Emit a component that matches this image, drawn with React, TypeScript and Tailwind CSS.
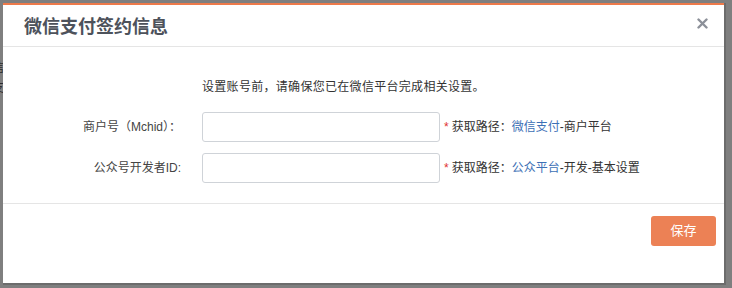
import React, { useState } from 'react';

const FONT = 'font-["Liberation_Sans","Noto_Sans_CJK_SC",sans-serif]';

const CloseIcon: React.FC = () => (
  <svg width="11" height="11" viewBox="0 0 11 11" className="block">
    <path d="M1.5 1.5 L9.5 9.5 M9.5 1.5 L1.5 9.5" stroke="#8c9099" strokeWidth="2.4" strokeLinecap="round" />
  </svg>
);

const App: React.FC = () => {
  const [mchid, setMchid] = useState<string>('');
  const [appId, setAppId] = useState<string>('');

  return (
    <div className={`w-[732px] h-[288px] bg-[#7f7f7f] overflow-hidden ${FONT}`}>
      <div className="flex h-full">
        {/* page behind the overlay peeks out on the left */}
        <div className="w-[3px] shrink-0 flex flex-col text-[12px] leading-[20px] text-[#2c2c2c] overflow-hidden">
          <div className="h-[58px]" />
          <span className="-ml-[8px]">信</span>
          <span className="-ml-[8px]">支</span>
        </div>

        <div className="mt-[3px] w-[721px] h-[280px] bg-white border-t-2 border-[#ee7a4a] shadow-[1px_1px_0_1px_#6c6c6c] flex flex-col">
          {/* header */}
          <div className="h-[42px] shrink-0 flex items-center justify-between pl-[21px] pr-[16px] border-b border-[#e5e5e5]">
            <h2 className="text-[18px] leading-[24px] font-bold text-[#4d525b] mt-[2px]">微信支付签约信息</h2>
            <button type="button" className="p-[0px] -mt-[4px]">
              <CloseIcon />
            </button>
          </div>

          {/* body */}
          <div className="flex flex-col pt-[31px] pb-[20px] border-b border-[#e5e5e5]">
            <p className="pl-[199px] text-[12px] leading-[18px] tracking-[0.3px] text-[#333]">
              设置账号前，请确保您已在微信平台完成相关设置。
            </p>

            <div className="flex flex-col gap-[11px] mt-[16px]">
              <div className="flex items-center">
                <label htmlFor="mchid" className="w-[178px] shrink-0 text-right text-[12px] leading-[18px] text-[#444]">
                  商户号（Mchid）：
                </label>
                <input
                  id="mchid"
                  type="text"
                  value={mchid}
                  onChange={(e) => setMchid(e.target.value)}
                  className="ml-[21px] w-[238px] h-[30px] border border-[#cfd3d8] rounded-[3px] px-2 text-[12px] outline-none"
                />
                <span className="ml-[4px] text-[12px] leading-[18px] text-[#333]">
                  <span className="text-[#e0312f] mr-[3px]">*</span>
                  获取路径：<span className="text-[#3c70b5]">微信支付</span>-商户平台
                </span>
              </div>

              <div className="flex items-center">
                <label htmlFor="appid" className="w-[178px] shrink-0 text-right text-[12px] leading-[18px] text-[#444]">
                  公众号开发者ID:
                </label>
                <input
                  id="appid"
                  type="text"
                  value={appId}
                  onChange={(e) => setAppId(e.target.value)}
                  className="ml-[21px] w-[238px] h-[30px] border border-[#cfd3d8] rounded-[3px] px-2 text-[12px] outline-none"
                />
                <span className="ml-[4px] text-[12px] leading-[18px] text-[#333]">
                  <span className="text-[#e0312f] mr-[3px]">*</span>
                  获取路径：<span className="text-[#3c70b5]">公众平台</span>-开发-基本设置
                </span>
              </div>
            </div>
          </div>

          {/* footer */}
          <div className="flex justify-end pt-[12px] pr-[8px]">
            <button
              type="button"
              className="w-[65px] h-[30px] rounded-[3px] bg-[#ec8155] text-white text-[13px] leading-[30px]"
            >
              保存
            </button>
          </div>
        </div>
      </div>
    </div>
  );
};

export default App;
